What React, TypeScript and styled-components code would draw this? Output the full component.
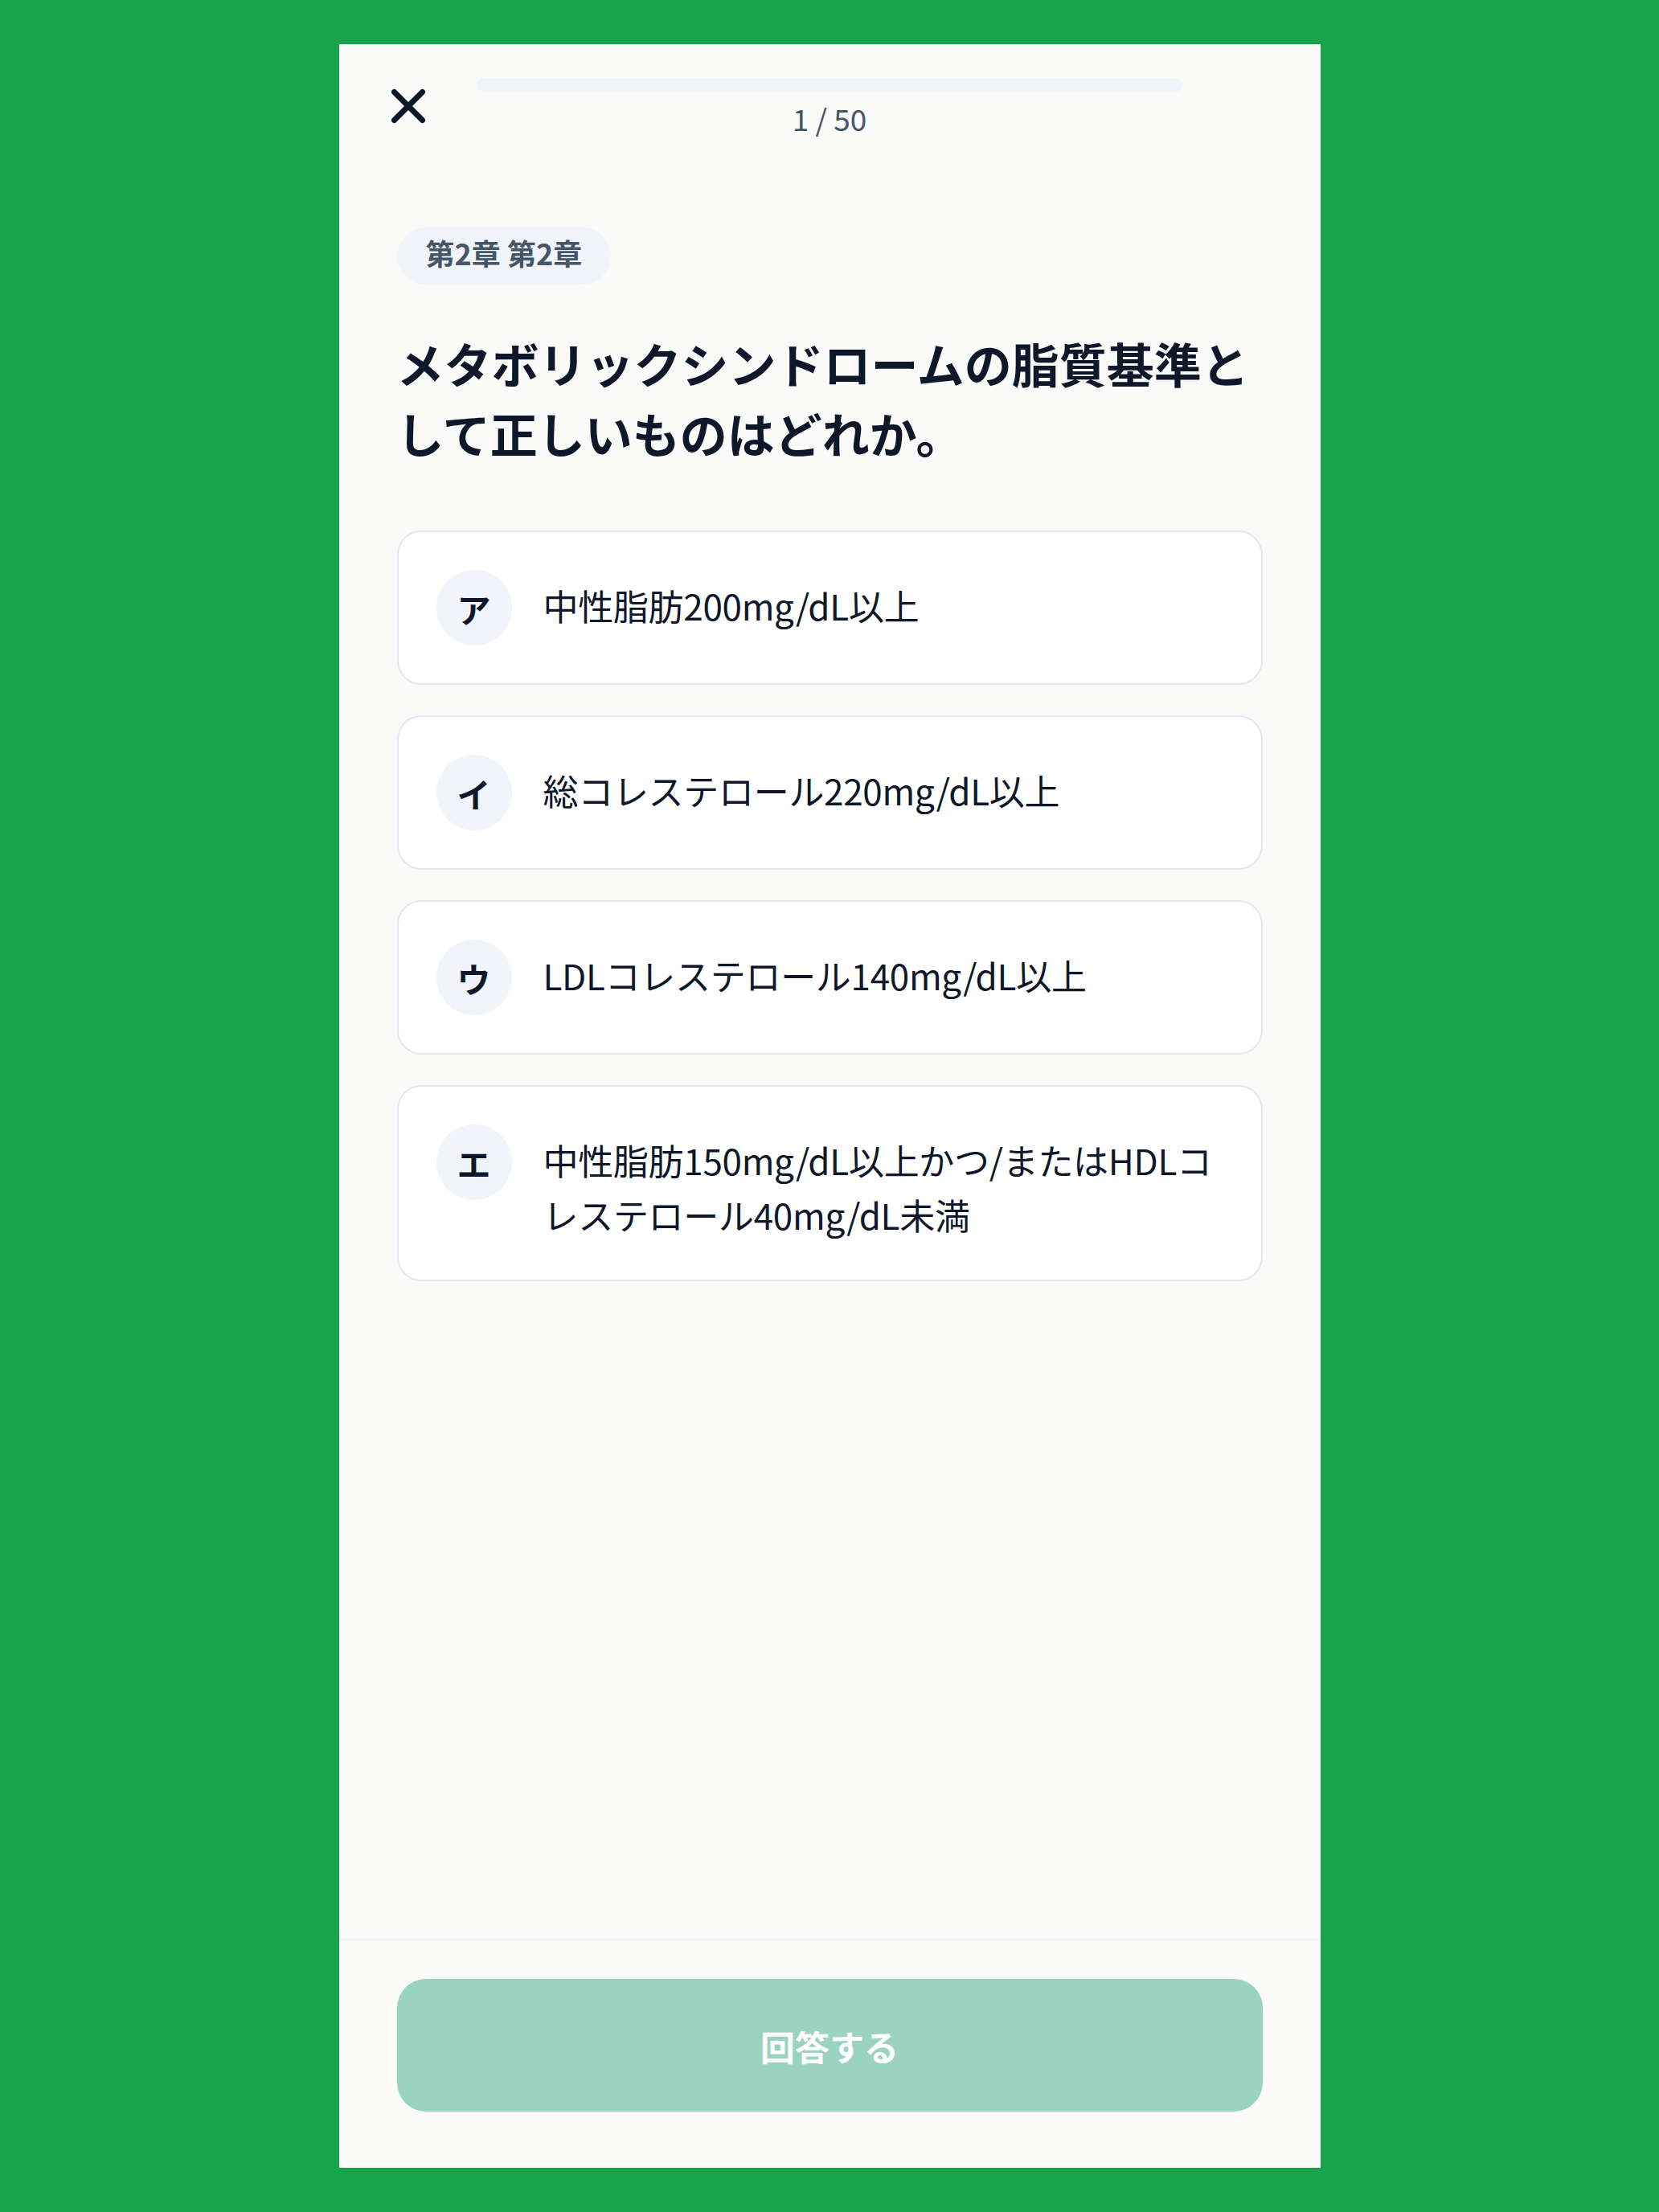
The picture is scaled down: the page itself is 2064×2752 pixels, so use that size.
import styled, { createGlobalStyle } from 'styled-components';

const GlobalStyle = createGlobalStyle`
  * {
    box-sizing: border-box;
  }

  html, body {
    margin: 0;
    padding: 0;
    background: #17a34a;
  }

  body {
    font-family: "Noto Sans CJK JP", "Noto Sans", sans-serif;
    color: #0f172a;
  }
`;

const options = [
  { mark: 'ア', text: '中性脂肪200mg/dL以上' },
  { mark: 'イ', text: '総コレステロール220mg/dL以上' },
  { mark: 'ウ', text: 'LDLコレステロール140mg/dL以上' },
  { mark: 'エ', text: '中性脂肪150mg/dL以上かつ/またはHDLコレステロール40mg/dL未満' },
];

const App = () => {
  const current = 1;
  const total = 50;

  return (
    <>
      <GlobalStyle />
      <Page>
        <QuizCard>
          <Header>
            <CloseButton aria-label="閉じる">
              <svg width="56" height="56" viewBox="0 0 56 56" fill="none">
                <path
                  d="M10.5 10.5 L45.5 45.5 M45.5 10.5 L10.5 45.5"
                  stroke="#0f172a"
                  strokeWidth="7"
                  strokeLinecap="round"
                />
              </svg>
            </CloseButton>
            <ProgressArea>
              <ProgressTrack />
              <Counter>{current} / {total}</Counter>
            </ProgressArea>
            <HeaderSpacer />
          </Header>

          <Body>
            <ChapterBadge>第2章 第2章</ChapterBadge>
            <Question>メタボリックシンドロームの脂質基準として正しいものはどれか。</Question>
            <OptionList>
              {options.map((o) => (
                <OptionCard key={o.mark}>
                  <OptionMark>{o.mark}</OptionMark>
                  <OptionText>{o.text}</OptionText>
                </OptionCard>
              ))}
            </OptionList>
          </Body>

          <Footer>
            <SubmitButton disabled>回答する</SubmitButton>
          </Footer>
        </QuizCard>
      </Page>
    </>
  );
};

const Page = styled.div`
  width: 100%;
  height: 2752px;
  padding: 55px 0;
  display: flex;
  justify-content: center;
`;

const QuizCard = styled.div`
  width: 1221px;
  height: 100%;
  background: #fafaf9;
  display: flex;
  flex-direction: column;
`;

const Header = styled.div`
  display: flex;
  align-items: flex-start;
  gap: 24px;
  padding: 42px 72px 0;
`;

const CloseButton = styled.button`
  width: 75px;
  height: 56px;
  margin-top: 7px;
  padding: 0;
  border: none;
  background: none;
  display: flex;
  align-items: center;
  justify-content: flex-start;
  cursor: pointer;

  svg {
    margin-left: -14px;
  }
`;

const ProgressArea = styled.div`
  flex: 1;
  display: flex;
  flex-direction: column;
  align-items: center;
`;

const ProgressTrack = styled.div`
  width: 100%;
  height: 17px;
  border-radius: 9px;
  background: #f1f5f9;
`;

const Counter = styled.div`
  margin-top: 8px;
  font-size: 37px;
  line-height: 50px;
  font-weight: 400;
  color: #475569;
`;

const HeaderSpacer = styled.div`
  width: 75px;
`;

const Body = styled.div`
  flex: 1;
  display: flex;
  flex-direction: column;
  align-items: flex-start;
  padding: 111px 72px 0;
`;

const ChapterBadge = styled.div`
  display: inline-flex;
  align-items: center;
  height: 71px;
  padding: 0 36px 9px;
  border-radius: 36px;
  background: #f1f5f9;
  color: #475569;
  font-size: 36px;
  line-height: 1;
  font-weight: 700;
`;

const Question = styled.h1`
  margin: 54px 0 0;
  font-size: 59px;
  line-height: 87px;
  font-weight: 700;
  color: #0f172a;
`;

const OptionList = styled.div`
  width: 100%;
  margin-top: 78px;
  display: flex;
  flex-direction: column;
  gap: 38px;
`;

const OptionCard = styled.div`
  display: flex;
  align-items: flex-start;
  gap: 39px;
  padding: 47px;
  background: #ffffff;
  border: 2px solid #e2e8f0;
  border-radius: 30px;
`;

const OptionMark = styled.div`
  flex: none;
  width: 94px;
  height: 94px;
  border-radius: 50%;
  background: #f1f5f9;
  display: flex;
  align-items: center;
  justify-content: center;
  font-size: 42px;
  font-weight: 700;
  color: #0f172a;
`;

const OptionText = styled.div`
  padding-top: 10px;
  font-size: 44px;
  line-height: 68px;
  letter-spacing: -0.3px;
  color: #0f172a;
`;

const Footer = styled.div`
  border-top: 2px solid #f1f5f9;
  padding: 48px 72px 70px;
`;

const SubmitButton = styled.button`
  width: 100%;
  height: 165px;
  border: none;
  border-radius: 36px;
  background: #9ad3c0;
  color: #ffffff;
  font-family: "Noto Sans CJK JP", "Noto Sans", sans-serif;
  font-size: 43px;
  font-weight: 700;
  cursor: default;
`;

export default App;
